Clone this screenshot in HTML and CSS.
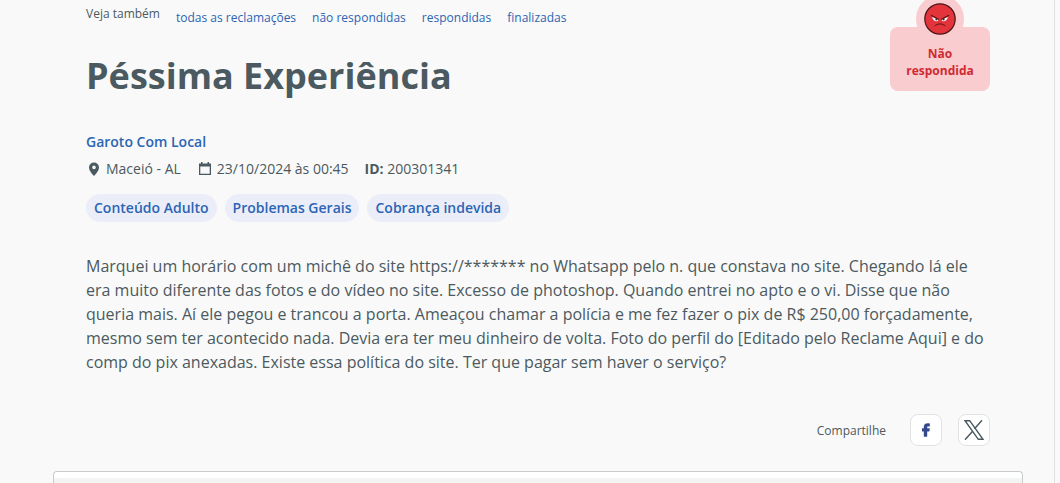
FILE: index.html
```html
<!DOCTYPE html>
<html lang="pt-BR">
<head>
  <meta charset="UTF-8">
  <meta name="viewport" content="width=device-width, initial-scale=1">
  <title>Péssima Experiência</title>
  <link rel="stylesheet" href="styles.css">
</head>
<body>

  <main class="page">
    <article class="complaint">
      <header class="complaint-header">
        <div class="heading">
          <nav class="see-also" aria-label="Veja também">
            <span>Veja também</span>
            <div class="see-also-links">
              <a href="#">todas as reclamações</a>
              <a href="#">não respondidas</a>
              <a href="#">respondidas</a>
              <a href="#">finalizadas</a>
            </div>
          </nav>
          <h1>Péssima Experiência</h1>
        </div>

        <div class="status">
          <span class="status-icon">
            <svg width="32" height="32" viewBox="0 0 32 32" aria-hidden="true">
              <circle cx="16" cy="16" r="15.2" fill="#e2343a" stroke="#4a1518" stroke-width="1.2"/>
              <path d="M8 13.800l6.500 3c-.5 2.200-5.300 2.600-6.500-3z" fill="#fff"/>
              <path d="M24 13.800l-6.500 3c.5 2.200 5.300 2.600 6.500-3z" fill="#fff"/>
              <circle cx="12.300" cy="16.500" r="1" fill="#333"/>
              <circle cx="19.700" cy="16.500" r="1" fill="#333"/>
              <path d="M7.500 12.500l7 3.700M24.500 12.500l-7 3.700" stroke="#571216" stroke-width="1.2" stroke-linecap="round"/>
              <path d="M11 22.600c3-2 7-2 10 0" fill="none" stroke="#7d1b1f" stroke-width="1.1" stroke-linecap="round"/>
            </svg>
          </span>
          Não respondida
        </div>
      </header>

      <a class="company" href="#">Garoto Com Local</a>

      <div class="details">
        <span class="detail">
          <svg width="16" height="16" viewBox="0 0 16 16" aria-hidden="true">
            <path d="M8 1.500a5 5 0 0 0-5 5C3 10.200 8 15 8 15s5-4.800 5-8.500a5 5 0 0 0-5-5zm0 6.700a1.800 1.800 0 1 1 0-3.600 1.800 1.800 0 0 1 0 3.600z"/>
          </svg>
          Maceió - AL
        </span>
        <span class="detail">
          <svg width="16" height="16" viewBox="0 0 16 16" aria-hidden="true">
            <path d="M4 1h1.500v1.500h5V1H12v1.500h2V14H2V2.500h2zM3.300 5.500v7.200h9.400V5.500z" fill-rule="evenodd"/>
          </svg>
          23/10/2024 às 00:45
        </span>
        <span><strong>ID:</strong> 200301341</span>
      </div>

      <div class="tags">
        <a href="#">Conteúdo Adulto</a>
        <a href="#">Problemas Gerais</a>
        <a href="#">Cobrança indevida</a>
      </div>

      <p class="description">Marquei um horário com um michê do site https://******* no Whatsapp pelo n. que constava no site. Chegando lá ele era muito diferente das fotos e do vídeo no site. Excesso de photoshop. Quando entrei no apto e o vi. Disse que não queria mais. Aí ele pegou e trancou a porta. Ameaçou chamar a polícia e me fez fazer o pix de R$ 250,00 forçadamente, mesmo sem ter acontecido nada. Devia era ter meu dinheiro de volta. Foto do perfil do [Editado pelo Reclame Aqui] e do comp do pix anexadas. Existe essa política do site. Ter que pagar sem haver o serviço?</p>

      <div class="share">
        <span class="share-label">Compartilhe</span>
        <div class="share-buttons">
          <button type="button" aria-label="Compartilhar no Facebook">
            <svg width="8" height="14" viewBox="0 0 8 14" aria-hidden="true">
              <path d="M2 13.500V8.200H0V5.600h2V4C2 1.600 3.300.5 5.500.5c1 0 1.700.1 2.200.2v2.500H6.300c-1 0-1.300.4-1.300 1.200v1.200h2.600l-.4 2.600H5v5.300z" fill="#33478c" stroke="#33478c" stroke-width=".4"/>
            </svg>
          </button>
          <button type="button" aria-label="Compartilhar no X">
            <svg width="20" height="20" viewBox="0 0 20 20" fill="none" stroke="#4b5a60" aria-hidden="true">
              <path d="M1 .7h4.700L19 19.300h-4.700z" stroke-width="1.400"/>
              <path d="M18 .3l-7.500 8.500M8.600 11.200L1 19.700" stroke-width="1.500"/>
            </svg>
          </button>
        </div>
      </div>
    </article>

    <section class="reply">
      <div class="reply-body"></div>
    </section>
  </main>

</body>
</html>
```

FILE: styles.css
```css
* {
  box-sizing: border-box;
}
body {
  margin: 0;
  padding-right: 5px;
  background-color: #f9f9f9;
  color: #4b5a60;
  font-family: "Open Sans", "Noto Sans", sans-serif;
  font-size: 14px;
}
a {
  color: #2b65b4;
  text-decoration: none;
}
.page {
  min-height: 100vh;
  padding: 0 31px 0 53px;
  border-right: 1px solid #dfe1e2;
}
.complaint {
  padding: 0 33px;
}
.complaint-header {
  display: flex;
  justify-content: space-between;
  align-items: flex-start;
}
.see-also {
  display: flex;
  align-items: flex-start;
  gap: 16px;
  padding-top: 6px;
  font-size: 12px;
  line-height: 16px;
}
.see-also-links {
  display: flex;
  flex-wrap: wrap;
  gap: 16px;
  padding-top: 4px;
}
h1 {
  margin: 25px 0 31px;
  font-size: 36px;
  line-height: 50px;
}
.status {
  position: relative;
  width: 100px;
  margin-top: 27px;
  padding: 18px 8px 12px;
  border-radius: 8px;
  background-color: #f9cccf;
  color: #cf2a31;
  font-size: 12px;
  font-weight: bold;
  line-height: 17px;
  text-align: center;
}
.status-icon {
  position: absolute;
  top: -32px;
  left: 26px;
  display: flex;
  align-items: center;
  justify-content: center;
  width: 48px;
  height: 48px;
  border-radius: 50%;
  background-color: #f9cccf;
}
.company {
  display: block;
  width: fit-content;
  font-weight: 600;
  line-height: 20px;
}
.details {
  display: flex;
  flex-wrap: wrap;
  gap: 16px;
  margin-top: 7px;
  line-height: 20px;
}
.detail {
  display: flex;
  align-items: center;
  gap: 4px;
}
.detail svg {
  fill: #4b5a60;
}
.tags {
  display: flex;
  flex-wrap: wrap;
  gap: 8px;
  margin-top: 15px;
}
.tags a {
  padding: 4px 8px;
  border-radius: 14px;
  background-color: #ebeef9;
  font-weight: 600;
  line-height: 20px;
}
.description {
  margin: 32px 0 40px;
  font-size: 16px;
  line-height: 24px;
}
.share {
  display: flex;
  align-items: center;
  justify-content: flex-end;
  gap: 24px;
}
.share-label {
  font-size: 12px;
}
.share-buttons {
  display: flex;
  gap: 16px;
}
.share button {
  display: flex;
  align-items: center;
  justify-content: center;
  width: 32px;
  height: 32px;
  padding: 0;
  border: 1px solid #e0e2e6;
  border-radius: 8px;
  background-color: #fff;
  cursor: pointer;
}
.reply {
  margin-top: 25px;
  padding-top: 6px;
  border: 1px solid #c8cdcc;
  border-bottom: 0;
  border-radius: 4px 4px 0 0;
  background-color: #fff;
}
.reply-body {
  height: 5px;
  background-color: #f3f4f4;
}
```
